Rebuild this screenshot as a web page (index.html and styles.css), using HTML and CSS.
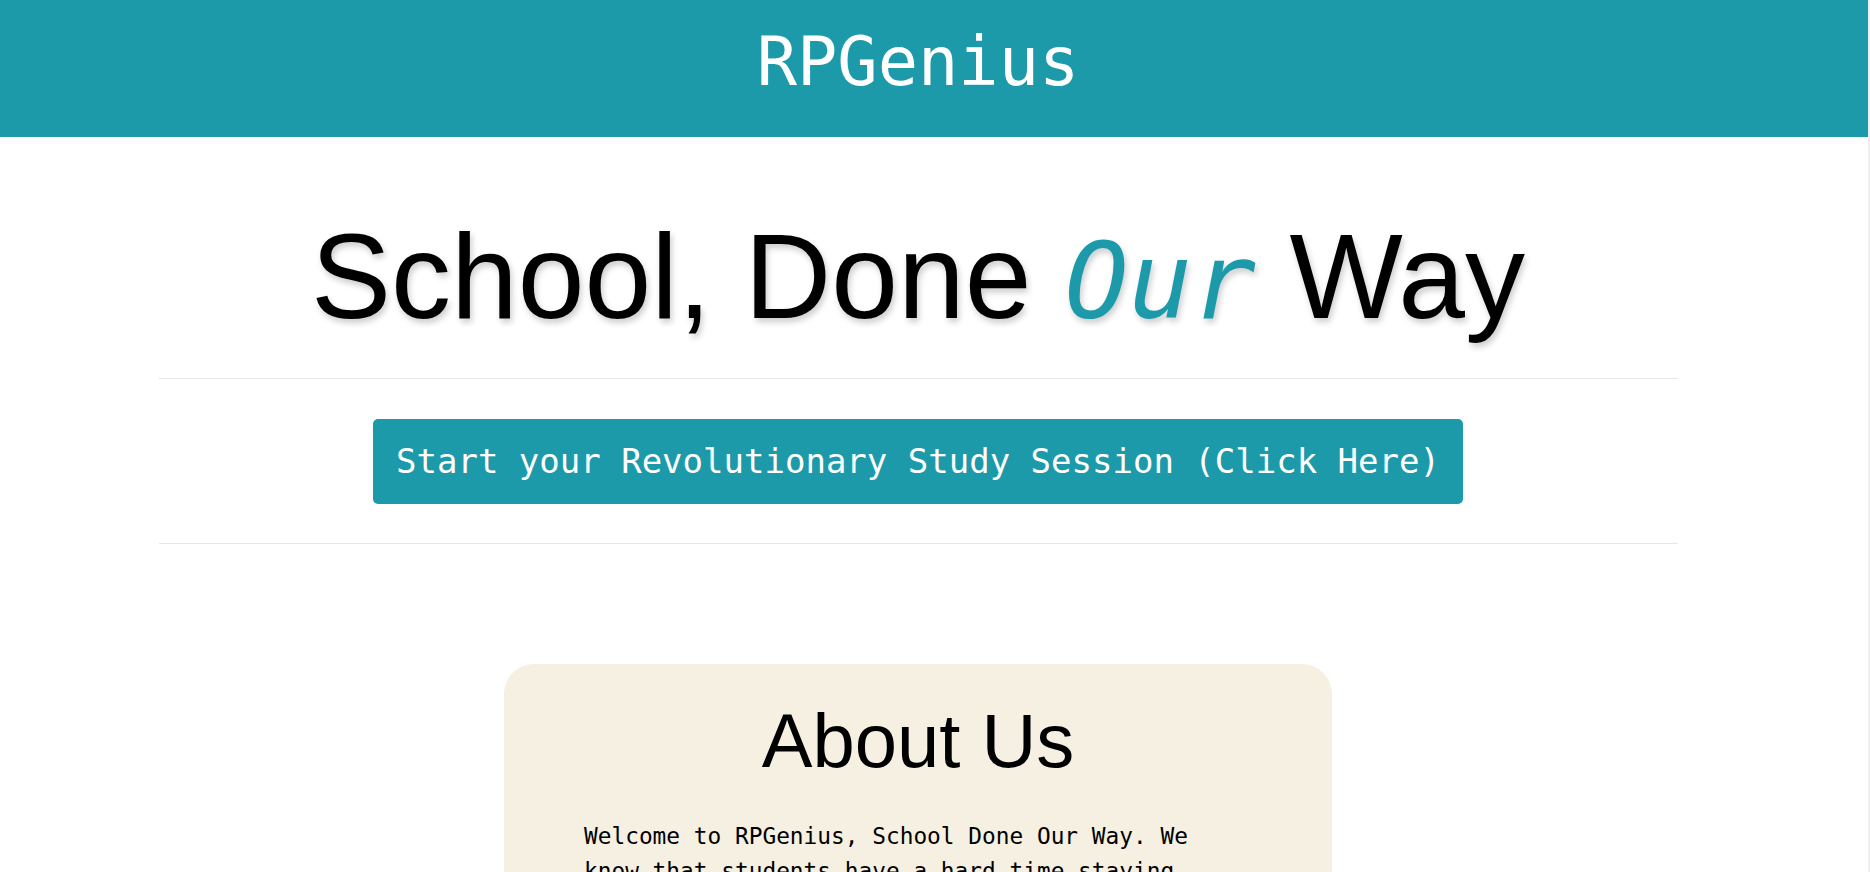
FILE: index.html
```html
<!DOCTYPE html>
<html lang="en">
<head>
<meta charset="utf-8">
<title>RPGenius</title>
<link rel="stylesheet" href="styles.css">
</head>
<body>
<header class="topbar">
  <div class="brand">RPGenius</div>
</header>
<main class="page">
  <h1 class="headline">School, Done <span class="accent">Our</span> Way</h1>
  <section class="cta">
    <a class="cta-button" href="#">Start your Revolutionary Study Session (Click Here)</a>
  </section>
  <section class="about">
    <h2 class="about-title">About Us</h2>
    <p class="about-text">Welcome to RPGenius, School Done Our Way. We know that students have a hard time staying focused and motivated while studying, so we turned studying into an adventure. Every session becomes a quest, every question a challenge, and every answer brings you closer to leveling up your knowledge.</p>
  </section>
</main>
</body>
</html>
```
FILE: styles.css
```css
html {
  background: #efefef;
  scrollbar-width: none;
}
body {
  margin: 0;
  width: 1868px;
  min-height: 872px;
  background: #ffffff;
  font-family: "DejaVu Sans Mono", "Liberation Mono", monospace;
  color: #000;
}
.topbar {
  background: #1c9aaa;
  height: 137px;
  box-sizing: border-box;
  padding: 23px 32px 0 0;
  text-align: center;
}
.brand {
  font-family: "DejaVu Sans Mono", monospace;
  font-size: 67px;
  line-height: 78px;
  color: #ffffff;
}
.page {
  width: 1836px;
  display: flex;
  flex-direction: column;
  align-items: center;
}
.headline {
  margin: 70px 0 0;
  font-family: "Liberation Sans", Arial, sans-serif;
  font-weight: normal;
  font-size: 120px;
  line-height: 138px;
  height: 138px;
  text-align: center;
  text-shadow: 2px 4px 6px rgba(0, 0, 0, 0.2);
  white-space: nowrap;
}
.accent {
  font-family: "DejaVu Sans Mono", monospace;
  font-style: oblique;
  font-size: 106px;
  line-height: 1;
  color: #1c9aaa;
}
.cta {
  margin-top: 33px;
  width: 1519px;
  border-top: 1px solid #e6e6e6;
  border-bottom: 1px solid #e6e6e6;
  padding: 40px 0 39px;
  display: flex;
  justify-content: center;
}
.cta-button {
  display: block;
  background: #1c9aaa;
  color: #ffffff;
  text-decoration: none;
  font-family: "DejaVu Sans Mono", monospace;
  font-size: 34px;
  line-height: 41px;
  padding: 22px 23px;
  border-radius: 5px;
  white-space: nowrap;
}
.about {
  margin-top: 120px;
  width: 828px;
  box-sizing: border-box;
  background: #f5f0e2;
  border-radius: 30px;
  padding: 33px 80px 40px;
}
.about-title {
  margin: 0;
  font-family: "Liberation Sans", Arial, sans-serif;
  font-weight: normal;
  font-size: 76px;
  line-height: 87px;
  text-align: center;
}
.about-text {
  margin: 35px 0 0;
  font-size: 22.8px;
  line-height: 35px;
}
```
